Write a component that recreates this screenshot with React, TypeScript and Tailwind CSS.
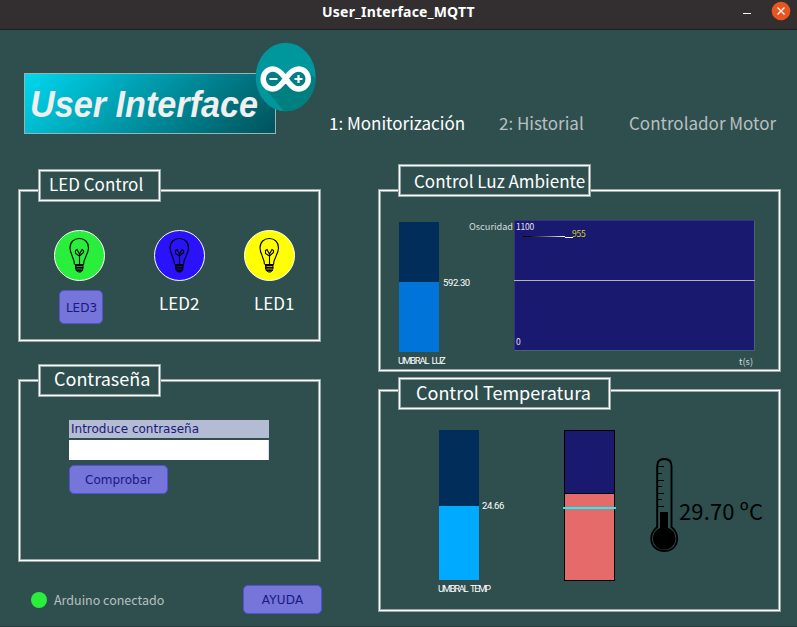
import type { ReactNode } from "react";

const LINE = "border border-white shadow-[0_0_0_1px_#98a7a7,inset_0_0_0_1px_#98a7a7]";
const SOURCE = "font-['Noto_Sans_CJK_SC','Open_Sans',sans-serif]";
const DEJAVU = "font-['DejaVu_Sans',sans-serif]";
const PIXEL = "font-['Roboto',sans-serif] text-[9.5px] leading-[10px] text-white whitespace-nowrap";

function Panel({ title, tab, body, children }: { title: string; tab: string; body: string; children: ReactNode }) {
  return (
    <section className="flex flex-col">
      <h2
        className={`relative z-10 ml-5 flex items-center whitespace-nowrap bg-[#2f4f4f] leading-none text-white ${LINE} ${tab}`}
      >
        {title}
      </h2>
      <div className={`${LINE} ${body}`}>{children}</div>
    </section>
  );
}

function Button({ className, children }: { className: string; children: ReactNode }) {
  return (
    <button
      className={`flex shrink-0 items-center justify-center rounded-[5px] border border-[#5252d6] bg-[#7575da] text-[#19197d] ${DEJAVU} ${className}`}
    >
      {children}
    </button>
  );
}

function Led({ color }: { color: string }) {
  return (
    <svg className="h-[51px] w-[51px] shrink-0" viewBox="0 0 51 51" fill="none">
      <circle cx="25.5" cy="25.5" r="25" fill={color} stroke="#fff" />
      <g stroke="#000" strokeWidth="1.1">
        <path d="M20.500 34.500C20.500 28 16 24 16 18C16 12 20 8.500 25.300 8.500S34.500 12 34.500 18C34.500 24 29.500 28 29.500 34.500" />
        <path d="M25.500 34V26M25.500 26L21.500 23.500V20.500L23 19.500L25.500 24L28 19.500L29.500 20.500V22.500L25.500 26" />
        <path d="M21 34V39L24 41.500H27L29.500 39V34Z" fill="#000" stroke="none" />
        <path d="M21 34.500H29.500M21.500 40L24.500 42H26.500L29 40" strokeWidth="1" />
        <path d="M22.500 36.500H28.500M22.500 39H28.500" stroke={color} strokeWidth="0.700" />
      </g>
    </svg>
  );
}

function ArduinoLogo() {
  return (
    <svg className="absolute left-[230px] top-[-32px] h-[70px] w-[62px]" viewBox="0 0 62 70">
      <defs>
        <clipPath id="disc">
          <ellipse cx="30.700" cy="35" rx="30" ry="34.300" />
        </clipPath>
      </defs>
      <ellipse cx="30.700" cy="35" rx="30" ry="34.300" fill="#00979c" />
      <path clipPath="url(#disc)" d="M9 45L31 72H62V38L50 26Z" fill="#007f80" />
      <path
        d="M30.700 36.500C26 30 22.500 27 18 27A9.800 10 0 0 0 18 47C23 47 26.500 43 30.700 36.500C35 30 38.500 27 43.500 27A9.800 10 0 0 1 43.500 47C38.500 47 35 43 30.700 36.500Z"
        fill="#007f84"
        stroke="#fff"
        strokeWidth="5.500"
      />
      <path d="M14.500 37H22.500M39.500 37H47.500M43.500 33V41" stroke="#fff" strokeWidth="2.200" />
    </svg>
  );
}

function Thermometer() {
  return (
    <svg className="mt-[28px] h-[95px] w-[29px] shrink-0" viewBox="0 0 29 95" fill="none" stroke="#000">
      <path
        d="M7.200 69V8C7.200 3 10 1 14.300 1S21.500 3 21.500 8V69C25 72 27.200 76 27.200 80.500C27.200 88 22 93 14.300 93S1.200 88 1.200 80.500C1.200 76 3.500 72 7.200 69Z"
        strokeWidth="1.900"
      />
      <path d="M8 8.500H14M8 15.500H12M8 22.500H14M8 28.500H12M8 35.500H14M8 41.500H12M8 48.500H14" strokeWidth="1" />
      <path d="M10 54H18V70H10Z" fill="#000" stroke="none" />
      <circle cx="14.200" cy="80.500" r="11.300" fill="#000" stroke="none" />
    </svg>
  );
}

export default function App() {
  return (
    <div className={`flex h-[627px] w-[797px] flex-col overflow-hidden border-b border-[#263f40] bg-[#2f4f4f] ${SOURCE}`}>
      <header className="flex h-[30px] shrink-0 items-start border-b border-[#1f1f1f] bg-[#332f30]">
        <h1 className="ml-[322px] w-[154px] whitespace-nowrap pt-[3px] font-['Noto_Sans',sans-serif] text-[14px] font-bold leading-[18px] tracking-[0.22px] text-white">
          User_Interface_MQTT
        </h1>
        <div className="ml-[267px] mt-[13px] h-px w-2 bg-white" />
        <svg className="ml-[20px] mt-[1px] h-5 w-5" viewBox="0 0 20 20">
          <circle cx="10" cy="10" r="9.300" fill="#e95420" />
          <path d="M6.500 6.500L13.500 13.500M13.500 6.500L6.500 13.500" stroke="#fff" strokeWidth="1.300" />
        </svg>
      </header>

      <div className="flex h-[135px] shrink-0 items-start">
        <div className="relative ml-6 mt-[43px] flex h-[61px] w-[252px] items-center border border-[#96b3b6] bg-linear-135 from-[#00d8f0] to-[#00535c] pl-[5px] pt-[2px]">
          <span className="origin-left scale-x-95 whitespace-nowrap font-['Liberation_Sans',sans-serif] text-[36px] font-bold italic leading-none text-[#f0f0f0]">
            User Interface
          </span>
          <ArduinoLogo />
        </div>
        <nav className="ml-[53px] mt-[81px] flex whitespace-nowrap text-[17px] leading-[23px] text-[#b9c0c0]">
          <a className="w-[170px] text-white">1: Monitorización</a>
          <a className="w-[130px]">2: Historial</a>
          <a>Controlador Motor</a>
        </nav>
      </div>

      <main className="flex flex-1 gap-[59px] pl-[19px]">
        <div className="flex w-[301px] flex-col pt-[5px]">
          <Panel title="LED Control" tab="-mb-[11px] h-[31px] w-[121px] pl-[9px] pb-[4px] text-[17px]" body="h-[151px] pl-[34px] pt-[39px]">
            <div className="flex">
              <Led color="#2aee3c" />
              <div className="w-[49px]" />
              <Led color="#2a12fb" />
              <div className="w-[39px]" />
              <Led color="#ffff00" />
            </div>
            <div className="mt-[9px] flex items-start text-[17px] leading-[26px] text-white">
              <Button className="ml-[5px] h-[34px] w-[44px] pl-px pt-px text-[12px]">LED3</Button>
              <span className="ml-[56px] w-[95px]">LED2</span>
              <span>LED1</span>
            </div>
          </Panel>

          <div className="h-6" />

          <Panel title="Contraseña" tab="-mb-[16px] h-[31px] w-[121px] pl-[14px] pb-[5px] text-[18px]" body="h-[181px] pl-[49px] pt-[39px]">
            <div className={`h-[18px] w-[200px] bg-[#b3bcd2] pl-[2px] text-[12px] leading-[18px] text-[#19197d] ${DEJAVU}`}>
              Introduce contraseña
            </div>
            <div className="mt-[2px] h-5 w-[200px] border-r border-[#dcdcfa] bg-white" />
            <Button className="mt-[5px] h-[29px] w-[99px] text-[12px]">Comprobar</Button>
          </Panel>

          <div className="mt-6 flex items-center pl-3">
            <div className="h-4 w-4 shrink-0 rounded-full bg-[#2aee3c]" />
            <span className="ml-[7px] w-[189px] shrink-0 whitespace-nowrap text-[12.5px] leading-5 text-[#b9c0c0]">
              Arduino conectado
            </span>
            <Button className="h-[29px] w-[79px] text-[12px] tracking-[0.2px]">AYUDA</Button>
          </div>
        </div>

        <div className="flex w-[401px] flex-col">
          <Panel title="Control Luz Ambiente" tab="-mb-[6px] h-[31px] w-[191px] pl-[14px] pb-px text-[17px]" body="flex h-[181px] items-start pl-[19px] pt-[29px]">
            <div className="mt-[2px] w-10">
              <div className="h-[60px] bg-[#002d5a]" />
              <div className="h-[70px] bg-[#0074d9]" />
              <div className={`-ml-px mt-[4px] [word-spacing:2px] tracking-[-1.2px] ${PIXEL}`}>UMBRAL LUZ</div>
            </div>
            <div className={`ml-[4px] mt-[58px] w-[26px] tracking-[-0.4px] ${PIXEL}`}>592.30</div>
            <div className="w-[45px] whitespace-nowrap text-[9.2px] leading-[13px] text-[#d5dcdc]">Oscuridad</div>
            <div className="w-[241px]">
              <div className="relative h-[131px] border border-b-[#4a6468] border-l-[#34347c] border-r-[#4a6468] border-t-[#34347c] bg-[#19196f] text-[8.5px] leading-[13px] tracking-[-0.2px] text-[#e3e3ef]">
                <span className="absolute -top-px left-[1px]">1100</span>
                <span className="absolute bottom-[2px] left-[1px]">0</span>
                <span className="absolute left-[57px] top-[6px] text-[#d6d618]">955</span>
                <div className="absolute left-[8px] top-[15px] h-px w-[42px] bg-gradient-to-r from-black to-white" />
                <div className="absolute left-[50px] top-[16px] h-px w-[8px] bg-white" />
                <div className="absolute -left-px -right-px top-[59px] h-px bg-[#b4b4b4]" />
              </div>
              <div className="mt-[3px] pr-[2px] text-right text-[9.200px] leading-[14px] text-[#d5dcdc]">t(s)</div>
            </div>
          </Panel>

          <div className="h-[7px]" />

          <Panel title="Control Temperatura" tab="-mb-[19px] h-[31px] w-[211px] pl-[16px] pb-[3px] text-[18px]" body="flex h-[221px] items-start pl-[59px] pt-[39px]">
            <div className="w-10">
              <div className="h-[76px] bg-[#002d5a]" />
              <div className="h-[74px] bg-[#00aaff]" />
              <div className={`-ml-px mt-[4px] [word-spacing:2px] tracking-[-1.4px] ${PIXEL}`}>UMBRAL TEMP</div>
            </div>
            <div className={`ml-[3px] mt-[71px] w-[82px] tracking-[-0.4px] ${PIXEL}`}>24.66</div>
            <div className="relative h-[151px] w-[51px] border border-black bg-[#e56a6a]">
              <div className="h-[63px] border-b border-black bg-[#19196f]" />
              <div className="absolute -left-[2px] -right-[2px] top-[76px] h-[2px] bg-[#00ffff]" />
            </div>
            <div className="w-[35px]" />
            <Thermometer />
            <div className="mt-[64px] whitespace-nowrap text-[22px] leading-8 tracking-[0.15px] text-black">29.70 ºC</div>
          </Panel>
        </div>
      </main>
    </div>
  );
}
